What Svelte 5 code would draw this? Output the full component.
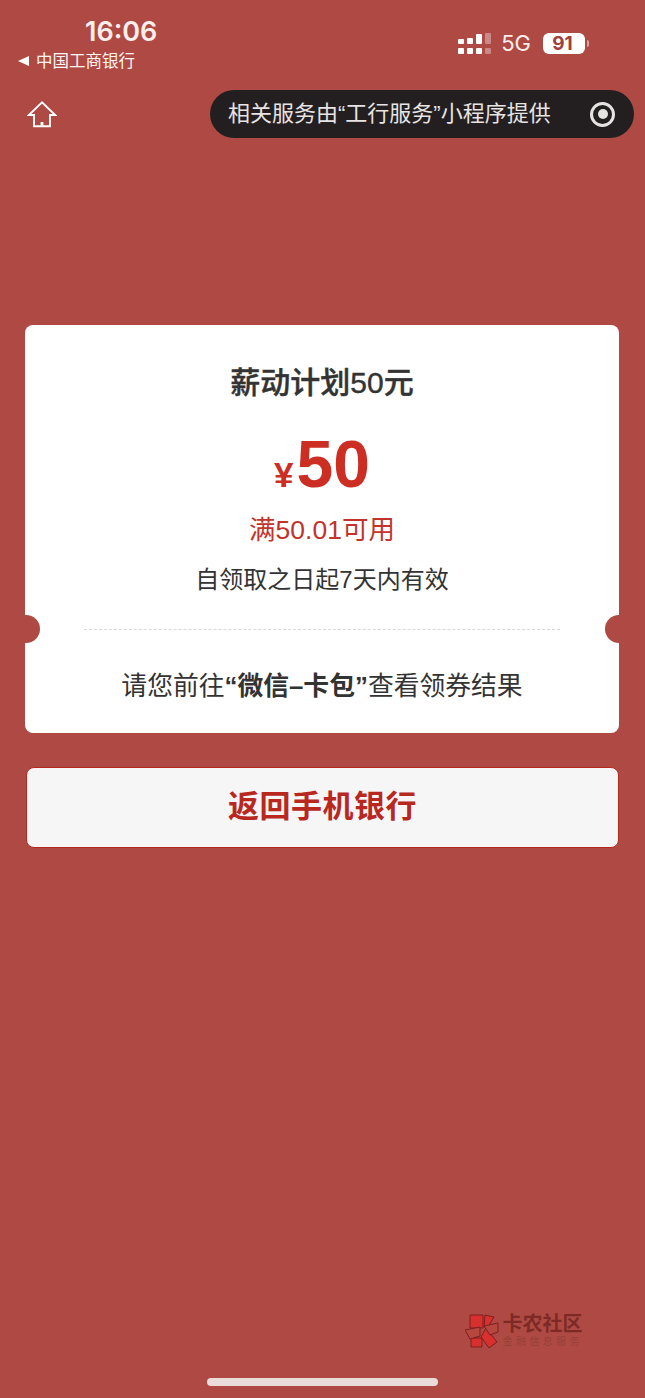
<script>
  const title = '薪动计划50元';
  const amount = 50;
  // top segment height of each signal column, the bottom segment is fixed
  const signal = [
    { top: 5, dim: false },
    { top: 6, dim: false },
    { top: 10, dim: false },
    { top: 11, dim: true }
  ];
</script>

<div class="page">
  <header class="status">
    <div class="status-left">
      <div class="time">16:06</div>
      <div class="carrier"><span class="back"></span>中国工商银行</div>
    </div>
    <div class="status-right">
      <div class="signal">
        {#each signal as bar}
          <div class="col" class:dim={bar.dim}>
            <span style="height: {bar.top}px"></span>
            <span class="low"></span>
          </div>
        {/each}
      </div>
      <span class="net">5G</span>
      <div class="battery"><span>91</span></div>
      <span class="battery-cap"></span>
    </div>
  </header>

  <nav class="nav">
    <svg class="home" viewBox="0 0 32 30" width="30" height="29" fill="none" stroke="#fff" stroke-width="2">
      <path d="M16 2 L2 15.5 H7.5 V27.5 H24.5 V15.5 H30 Z" stroke-linejoin="miter" />
      <path d="M16 27 V23" stroke-width="3" />
    </svg>
    <div class="pill">
      <span class="pill-text">相关服务由“工行服务”小程序提供</span>
      <span class="pill-target"><i></i></span>
    </div>
  </nav>

  <main class="content">
    <section class="card">
      <div class="card-top">
        <h1>{title}</h1>
        <div class="price"><span class="yen">¥</span><span class="num">{amount}</span></div>
        <div class="limit">满50.01可用</div>
        <div class="valid">自领取之日起7天内有效</div>
      </div>
      <div class="divider"></div>
      <div class="hint">请您前往<b>“微信–卡包”</b>查看领券结果</div>
    </section>
    <button class="back-btn">返回手机银行</button>
  </main>

  <footer class="foot">
    <div class="mark">
      <svg viewBox="0 0 34 34" width="34" height="34">
        <path d="M5 1 H18 V14 H5 Z M20 1 L29 3 L23 13 L19 13 Z M6 24 H17 V33 H6 Z M21 14 L32 28 L24 34 L16 23 Z" fill="#d8302f" stroke="#7c1f1f" stroke-width="1" />
        <path d="M0 16 L15 13 L15 22 L5 25 Z M19 12 L33 9 L33 18 L25 21 Z" fill="#b5473f" stroke="#7c1f1f" stroke-width="1" />
      </svg>
      <div class="mark-text">
        <div class="mark-title">卡农社区</div>
        <div class="mark-sub">金融信息服务</div>
      </div>
    </div>
    <div class="home-bar"></div>
  </footer>
</div>

<style>
  :global(body) {
    margin: 0;
    background: #ae4a43;
  }

  .page {
    width: 645px;
    height: 1398px;
    background: #ae4a43;
    display: flex;
    flex-direction: column;
    overflow: hidden;
    font-family: "Liberation Sans", "Noto Sans CJK SC", sans-serif;
  }

  /* status bar */
  .status {
    display: flex;
    justify-content: space-between;
    height: 90px;
    box-sizing: border-box;
    padding: 15px 56px 0 18px;
    color: #fff;
  }

  .status-left {
    display: flex;
    flex-direction: column;
    align-items: flex-start;
  }

  .time {
    font-family: Inter, "Liberation Sans", sans-serif;
    font-size: 27px;
    font-weight: 600;
    line-height: 33px;
    margin-left: 67px;
    color: #fbeeec;
  }

  .carrier {
    display: flex;
    align-items: center;
    font-size: 16.5px;
    line-height: 24px;
    margin-top: 1px;
    color: #fdf5f4;
  }

  .back {
    width: 0;
    height: 0;
    border-top: 5px solid transparent;
    border-bottom: 5px solid transparent;
    border-right: 11px solid #fff;
    margin-right: 7px;
  }

  .status-right {
    display: flex;
    align-items: center;
    height: 24px;
    margin-top: 16px;
  }

  .signal {
    display: flex;
    align-items: flex-end;
    gap: 3px;
    height: 22px;
  }

  .col {
    display: flex;
    flex-direction: column;
    gap: 4px;
  }

  .col span {
    display: block;
    width: 6px;
    background: #fff;
    border-radius: 1px;
  }

  .col span.low {
    height: 6px;
  }

  .col.dim span {
    background: rgba(255, 255, 255, 0.35);
  }

  .net {
    font-family: Inter, "Liberation Sans", sans-serif;
    font-size: 22px;
    color: #fbeeec;
    margin-left: 10px;
  }

  .battery {
    margin-left: 12px;
    width: 42px;
    height: 21px;
    background: #fff;
    border-radius: 6px;
    display: flex;
    align-items: center;
    justify-content: center;
    border-right: 3px solid rgba(255, 255, 255, 0.45);
    box-sizing: border-box;
  }

  .battery span {
    font-family: Inter, "Liberation Sans", sans-serif;
    font-size: 19px;
    font-weight: 700;
    color: #a23f3c;
  }

  .battery-cap {
    width: 2px;
    height: 7px;
    margin-left: 2px;
    background: rgba(255, 255, 255, 0.5);
    border-radius: 0 2px 2px 0;
  }

  /* nav */
  .nav {
    display: flex;
    align-items: center;
    justify-content: space-between;
    height: 48px;
    padding: 0 11px 0 27px;
  }

  .pill {
    width: 424px;
    height: 48px;
    box-sizing: border-box;
    background: #231f20;
    border-radius: 24px;
    display: flex;
    align-items: center;
    justify-content: space-between;
    padding: 0 19px 0 18px;
  }

  .pill-text {
    font-size: 22px;
    line-height: 30px;
    color: #e8e4e3;
    white-space: nowrap;
  }

  .pill-target {
    width: 25px;
    height: 25px;
    box-sizing: border-box;
    border: 3.5px solid #e6e3e3;
    border-radius: 50%;
    display: flex;
    align-items: center;
    justify-content: center;
  }

  .pill-target i {
    width: 10px;
    height: 10px;
    border-radius: 50%;
    background: #e6e3e3;
  }

  /* card */
  .content {
    padding: 187px 26px 0 25px;
    display: flex;
    flex-direction: column;
  }

  .card {
    position: relative;
    height: 408px;
    box-sizing: border-box;
    background: #fff;
    border-radius: 8px;
    display: flex;
    flex-direction: column;
    align-items: center;
    color: #2e2e2e;
  }

  .card::before,
  .card::after {
    content: '';
    position: absolute;
    top: 290px;
    width: 28px;
    height: 28px;
    border-radius: 50%;
    background: #ae4a43;
  }

  .card::before { left: -13px; }
  .card::after { right: -14px; }

  .card-top {
    height: 304px;
    box-sizing: border-box;
    padding-top: 36px;
    display: flex;
    flex-direction: column;
    align-items: center;
  }

  h1 {
    margin: 0;
    font-size: 30px;
    line-height: 44px;
    font-weight: 500;
    color: #333;
    -webkit-text-stroke: 0.4px #333;
  }

  .price {
    display: flex;
    align-items: baseline;
    color: #cc2e24;
    font-family: "Liberation Sans", sans-serif;
    font-weight: 700;
    margin-top: 23px;
    height: 72px;
    line-height: 72px;
  }

  .yen {
    font-size: 35px;
    margin-right: 3px;
  }

  .num {
    font-size: 66px;
  }

  .limit {
    font-size: 26.5px;
    line-height: 38px;
    margin-top: 11px;
    color: #c2332c;
    font-weight: 400;
  }

  .valid {
    font-size: 24px;
    line-height: 36px;
    margin-top: 13px;
    color: #333;
  }

  .divider {
    width: 476px;
    border-top: 1px dashed #d9d9d9;
  }

  .hint {
    font-size: 25.8px;
    line-height: 36px;
    margin-top: 38px;
    color: #333;
    white-space: nowrap;
  }

  .hint b {
    font-weight: 700;
  }

  .back-btn {
    margin: 34px 0 0 1px;
    height: 81px;
    width: 593px;
    box-sizing: border-box;
    background: #f6f6f6;
    border: 1.5px solid #b5271f;
    border-radius: 8px;
    color: #b8281f;
    font-family: inherit;
    font-size: 31px;
    font-weight: 700;
    letter-spacing: 0.5px;
    padding: 0 0 8px;
  }

  /* footer */
  .foot {
    margin-top: auto;
    display: flex;
    flex-direction: column;
    align-items: center;
    position: relative;
  }

  .mark {
    position: absolute;
    right: 62px;
    bottom: 50px;
    display: flex;
    align-items: center;
    gap: 4px;
  }

  .mark-title {
    font-size: 20px;
    line-height: 23px;
    font-weight: 700;
    color: #7d2a26;
  }

  .mark-sub {
    font-size: 10px;
    line-height: 12px;
    letter-spacing: 3.4px;
    color: #983f39;
    white-space: nowrap;
  }

  .home-bar {
    width: 231px;
    height: 8px;
    border-radius: 4px;
    background: #e9dcda;
    margin-bottom: 12px;
  }
</style>
